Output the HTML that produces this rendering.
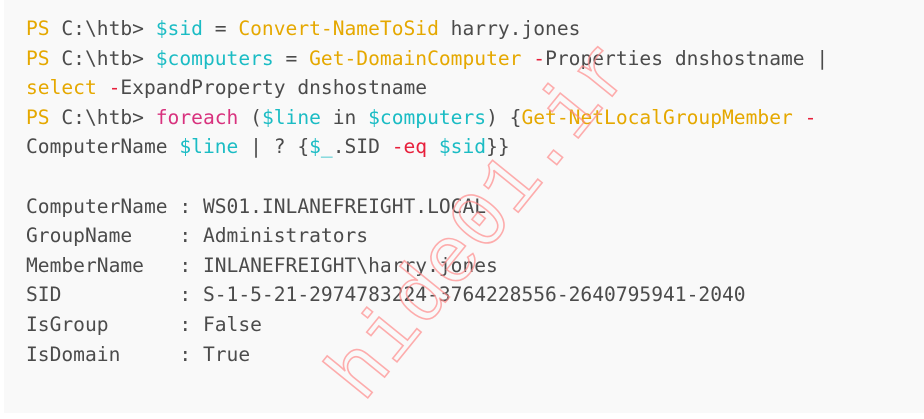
<!DOCTYPE html>
<html><head><meta charset="utf-8"><style>
html,body{margin:0;padding:0;width:924px;height:413px;overflow:hidden;background:#fff}
.box{position:absolute;left:4px;top:0;width:920px;height:413px;background:#f9f9f9}
pre{position:absolute;left:26px;top:14px;margin:0;font-family:"DejaVu Sans Mono","Liberation Mono",monospace;font-size:19.6px;line-height:29.6px;color:#4b4b4b}
.y{color:#e5a800}.c{color:#1bbcc4}.p{color:#d8327e}.r{color:#e8203c}
.wm{position:absolute;font-family:"Liberation Mono",monospace;font-size:80px;color:transparent;-webkit-text-stroke:1.6px rgba(255,140,140,.7);transform:rotate(-51deg);transform-origin:0 0;white-space:nowrap;left:312px;top:362px}
</style></head><body><div class="box"></div>
<pre><span class="y">PS</span> C:\htb&gt; <span class="c">$sid</span> = <span class="y">Convert-NameToSid</span> harry.jones
<span class="y">PS</span> C:\htb&gt; <span class="c">$computers</span> = <span class="y">Get-DomainComputer</span> <span class="r">-</span>Properties dnshostname |
<span class="y">select</span> <span class="r">-</span>ExpandProperty dnshostname
<span class="y">PS</span> C:\htb&gt; <span class="p">foreach</span> (<span class="c">$line</span> in <span class="c">$computers</span>) {<span class="y">Get-NetLocalGroupMember</span> <span class="r">-</span>
ComputerName <span class="c">$line</span> | ? {<span class="c">$_</span>.SID <span class="r">-eq</span> <span class="c">$sid</span>}}

ComputerName : WS01.INLANEFREIGHT.LOCAL
GroupName    : Administrators
MemberName   : INLANEFREIGHT\harry.jones
SID          : S-1-5-21-2974783224-3764228556-2640795941-2040
IsGroup      : False
IsDomain     : True</pre>
<div class="wm">hide01.ir</div>
</body></html>
